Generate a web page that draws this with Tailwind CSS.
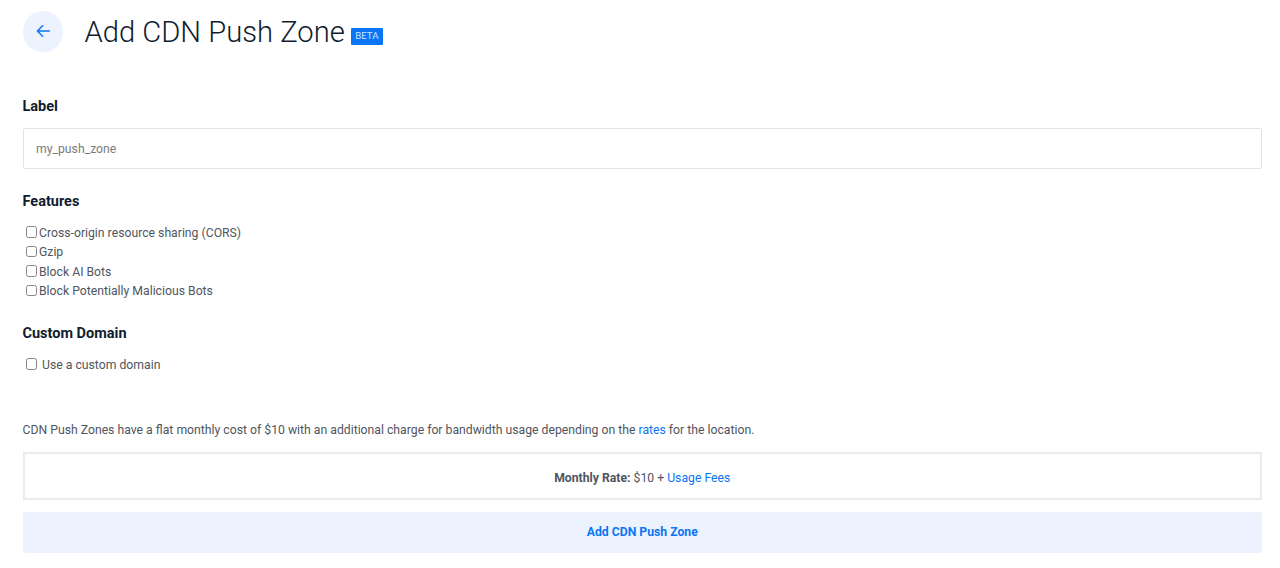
<!doctype html>
<html><head><meta charset="utf-8"><script src="https://cdn.jsdelivr.net/npm/@tailwindcss/browser@4"></script></head>
<body class="bg-white overflow-hidden font-['Roboto',sans-serif]">
<div class="h-[568px] w-[1280px] pl-[22.5px] pr-[18px] pt-[11px] text-[12.23px] text-[#4f5660]">
  <div class="flex items-center h-[41px]">
    <a class="flex h-[40.5px] w-[40.5px] items-center justify-center rounded-full bg-[#edf3fe]">
      <svg class="h-[18px] w-[18px] -mt-[1px]" viewBox="0 0 24 24" fill="none" stroke="#0b76f5" stroke-width="2" stroke-linecap="round" stroke-linejoin="round"><path d="M20.5 12H4.5M11.5 5l-7 7 7 7"/></svg>
    </a>
    <h1 class="ml-[21.5px] mt-[2px] text-[29.2px] leading-[41px] font-light text-[#111c2e] whitespace-nowrap">Add CDN Push Zone</h1>
    <span class="ml-[6px] mt-[10px] flex h-[17px] w-[32px] items-center justify-center rounded-[1px] bg-[#0b76f5] text-[9.6px] text-[#cfe3fd]">BETA</span>
  </div>
  <h2 class="mt-[45px] text-[14.5px] leading-[20px] font-bold text-[#111c2e]">Label</h2>
  <div class="mt-[11px] flex h-[41px] items-center rounded-[2px] border border-[#e2e3e5] pl-[12.5px] pt-[2px] text-[#7a7b7d]">my_push_zone</div>
  <h2 class="mt-[23px] text-[14.5px] leading-[20px] font-bold text-[#111c2e]">Features</h2>
  <div class="mt-[11px] ml-[3px] flex flex-col">
    <label class="flex h-[19.6px] items-center gap-[2px]"><input type="checkbox" class="m-0 -mt-[2px] h-[11.5px] w-[11.5px] appearance-none rounded-[2.5px] border border-[#858585]">Cross-origin resource sharing (CORS)</label>
    <label class="flex h-[19.6px] items-center gap-[2px]"><input type="checkbox" class="m-0 -mt-[2px] h-[11.5px] w-[11.5px] appearance-none rounded-[2.5px] border border-[#858585]">Gzip</label>
    <label class="flex h-[19.6px] items-center gap-[2px]"><input type="checkbox" class="m-0 -mt-[2px] h-[11.5px] w-[11.5px] appearance-none rounded-[2.5px] border border-[#858585]">Block AI Bots</label>
    <label class="flex h-[19.6px] items-center gap-[2px]"><input type="checkbox" class="m-0 -mt-[2px] h-[11.5px] w-[11.5px] appearance-none rounded-[2.5px] border border-[#858585]">Block Potentially Malicious Bots</label>
  </div>
  <h2 class="mt-[23px] text-[14.5px] leading-[20px] font-bold text-[#111c2e]">Custom Domain</h2>
  <label class="mt-[10.5px] ml-[3px] flex h-[20px] items-center gap-[5px]"><input type="checkbox" class="m-0 -mt-[2px] h-[11.5px] w-[11.5px] appearance-none rounded-[2.5px] border border-[#858585]">Use a custom domain</label>
  <p class="mt-[45.5px] leading-[20px]">CDN Push Zones have a flat monthly cost of $10 with an additional charge for bandwidth usage depending on the <a class="text-[#0b76f5]">rates</a> for the location.</p>
  <div class="mt-[12px] flex h-[48px] items-center justify-center border-2 border-[#ebebeb] pt-[3px]"><span><b class="font-bold">Monthly Rate:</b> $10 + <a class="text-[#0b76f5]">Usage Fees</a></span></div>
  <button class="mt-[12px] flex h-[40.5px] w-full items-center justify-center rounded-[3px] bg-[#edf3fe] font-bold text-[#0b76f5]">Add CDN Push Zone</button>
</div>
</body></html>
